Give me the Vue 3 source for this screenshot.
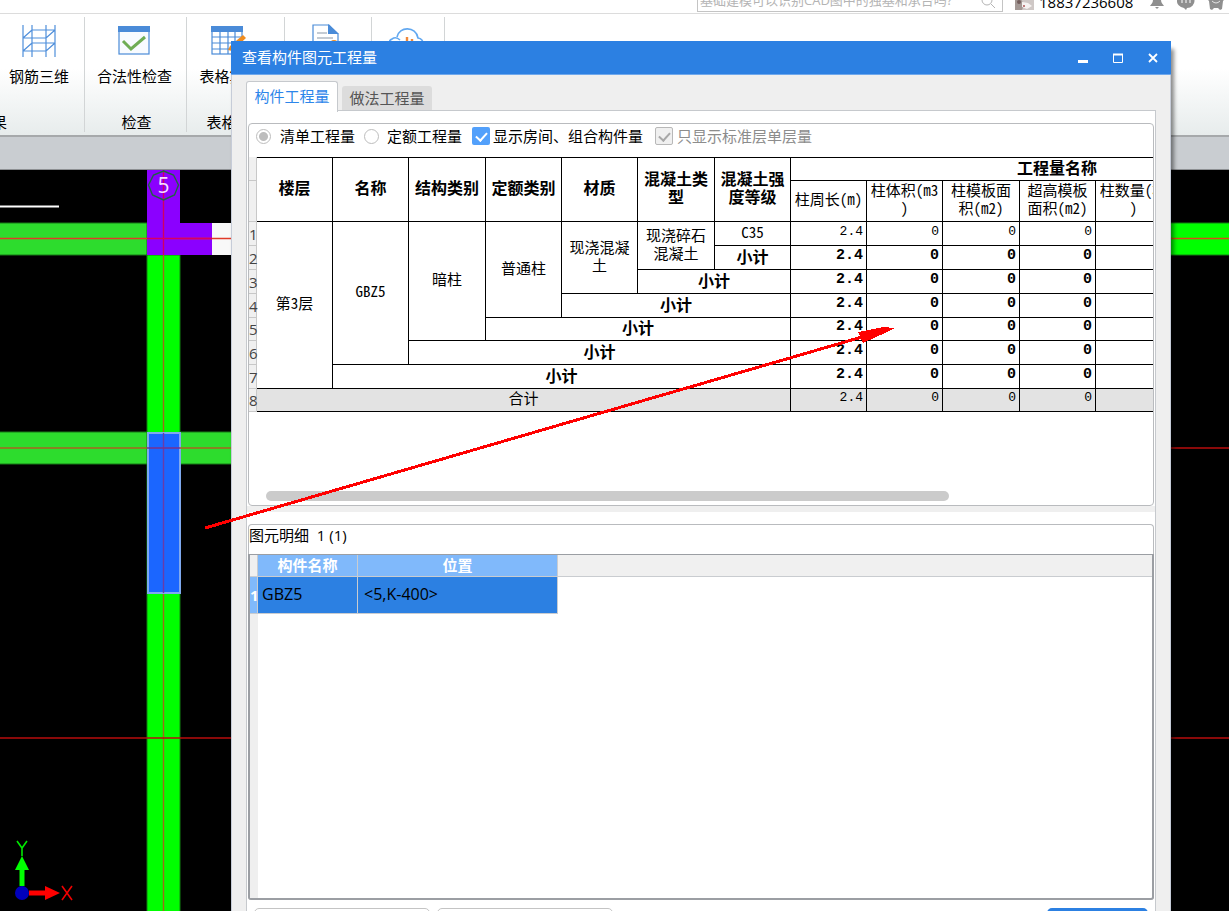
<script setup>
import { ref } from 'vue'

const mode = ref('list')
const showRooms = ref(true)
const floorOnly = ref(true)

const colClasses = ['', '', 'wide', '', '', 'wide', '', '', '', 'wide', '', '', '', '']
const groupHeads = ['楼层', '名称', '结构类别', '定额类别', '材质', '混凝土类\n型', '混凝土强\n度等级']
const measures = ['柱周长(m)', '柱体积(m3\n)', '柱模板面\n积(m2)', '超高模板\n面积(m2)', '柱数量(根\n)', '', '']

const rows = [
  {
    cells: [
      { t: '第3层', r: 7 },
      { t: 'GBZ5', r: 6 },
      { t: '暗柱', r: 5 },
      { t: '普通柱', r: 4 },
      { t: '现浇混凝\n土', r: 3 },
      { t: '现浇碎石\n混凝土', r: 2 },
      { t: 'C35' }
    ]
  },
  { bold: true, cells: [{ t: '小计' }] },
  { bold: true, cells: [{ t: '小计', c: 2 }] },
  { bold: true, cells: [{ t: '小计', c: 3 }] },
  { bold: true, short: true, cells: [{ t: '小计', c: 4 }] },
  { bold: true, cells: [{ t: '小计', c: 5 }] },
  { bold: true, cells: [{ t: '小计', c: 6 }] },
  { total: true, short: true, cells: [{ t: '合计', c: 7 }] }
]
const values = ['2.4', '0', '0', '0', '', '', '']
</script>

<template>
  <div class="app">
    <header class="topbar">
      <div class="search">
        <input type="text" aria-label="搜索" placeholder="基础建模可以识别CAD图中的独基和承台吗?" />
        <svg width="16" height="16" viewBox="0 0 16 16" fill="none" stroke="#b4b4b4" stroke-width="1">
          <circle cx="6" cy="8" r="5" /><path d="M10 12l4 4" />
        </svg>
      </div>
      <svg class="avatar" width="19" height="19" viewBox="0 0 19 19">
        <rect width="19" height="19" fill="#cfc8c6" />
        <path d="M0 0h7l-1 8 3 6-2 5H0z" fill="#a39894" />
        <path d="M7 11l6 1 4 3-5 3-5-2z" fill="#f6f3f2" />
        <circle cx="4" cy="11" r="2" fill="#735e5c" /><circle cx="9" cy="15" r="1" fill="#a55" />
      </svg>
      <span class="phone">18837236608</span>
      <svg class="top-icon" width="16" height="16" viewBox="0 0 16 16" fill="#8f8f8f">
        <path d="M8 0c3 0 4 3 4 6 0 3 2 4 3 6H1c1-2 3-3 3-6 0-3 1-6 4-6zM6 13h4l-2 2z" />
      </svg>
      <svg class="top-icon" width="18" height="16" viewBox="0 0 18 16">
        <path d="M9 0a8 7 0 0 1 1 14l-1 2-2-2A8 7 0 0 1 9 0z" fill="#8f8f8f" />
        <path d="M5 5v4M9 5v4M13 5v4" stroke="#fff" stroke-width="1" />
      </svg>
      <svg class="top-icon" width="18" height="18" viewBox="0 0 18 18">
        <path d="M0 0h18v7l-2 2-1 8-2 1-2-2H7l-2 2-2-1-1-8-2-2z" fill="#8f8f8f" />
        <path d="M5 9q4 4 8 0" fill="none" stroke="#e4e4e4" />
      </svg>
    </header>

    <nav class="ribbon">
      <section class="group g1">
        <button type="button" class="tool">
          <svg width="34" height="34" viewBox="0 0 34 34" fill="none" stroke="#4f8fdb" stroke-width="1.2">
            <path d="M1 1v32M10 1v32M24 1v32M33 1v32M10 6h23M1 14h23M10 19h23M1 27h23M1 14l9-8M24 14l9-8M1 27l9-8M24 27l9-8" />
          </svg>
          <span>钢筋三维</span>
        </button>
        <div class="group-name">查看结果</div>
      </section>
      <section class="group g2">
        <button type="button" class="tool">
          <svg width="34" height="34" viewBox="0 0 34 34">
            <rect x="2" y="3" width="30" height="27" fill="#f8fbff" stroke="#4a8bd8" stroke-width="1.2" />
            <path d="M1 2h32v6H1z" fill="#4a8bd8" />
            <path d="M6 17l8 8L28 13" fill="none" stroke="#6fad55" stroke-width="3" />
          </svg>
          <span>合法性检查</span>
        </button>
        <div class="group-name">检查</div>
      </section>
      <section class="group g3">
        <button type="button" class="tool">
          <svg width="38" height="34" viewBox="0 0 38 34">
            <rect x="2" y="3" width="30" height="27" fill="#fff" stroke="#4a8bd8" stroke-width="1.2" />
            <path d="M1 2h32v6H1z" fill="#4a8bd8" />
            <path d="M2 13h30M2 19h30M2 25h30M10 8v22M18 8v22M25 8v22" stroke="#4a8bd8" stroke-width="1.2" />
            <path d="M18 26l2-4 13-11 3 3-14 13z" fill="#f08c1e" />
          </svg>
          <span>表格算量</span>
        </button>
        <div class="group-name">表格算量</div>
      </section>
      <section class="group g4">
        <button type="button" class="tool" aria-label="报表">
          <svg width="34" height="34" viewBox="0 0 34 34">
            <path d="M2 1h16l9 9v22H2z" fill="#fff" stroke="#4a8bd8" stroke-width="1.2" />
            <path d="M17 0l11 10H17z" fill="#4a8bd8" />
            <path d="M6 9h10M6 14h16" stroke="#8a97a8" stroke-width="1.2" /><circle cx="23" cy="20" r="4" fill="#f08c1e" />
          </svg>
        </button>
      </section>
      <section class="group g5">
        <button type="button" class="tool" aria-label="云指标">
          <svg width="38" height="34" viewBox="0 0 38 34" fill="none">
            <path d="M5 30a8 8 0 0 1-2-15q4-3 8 1M8 13c2-11 19-11 21 1 7 1 7 12 2 15" stroke="#62a8f0" stroke-width="1.600" />
            <path d="M14 30V18M18 30V13M23 30V15" stroke="#f0883a" stroke-width="2.400" />
          </svg>
        </button>
      </section>
    </nav>
    <div class="band"></div>

    <main class="stage">
      <svg class="drawing" width="100%" height="100%">
        <path d="M0 36.500H59" stroke="#fff" stroke-width="2" />
        <g fill="#2ddc2d" stroke="#167a16" stroke-width="1">
          <rect x="-1" y="53" width="148" height="32" /><rect x="-1" y="262" width="260" height="32" />
        </g>
        <rect x="211" y="53" width="40" height="32" fill="#f8f8f8" />
        <rect x="147" y="85" width="33" height="700" fill="#00ff00" stroke="#108010" />
        <rect x="1100" y="53" width="2000" height="32" fill="#00ff00" stroke="#108010" />
        <path d="M147 0h33v53h32v32h-65z" fill="#8b00ff" />
        <rect x="148" y="263" width="32" height="160" fill="#1b66ff" stroke="#7fa9ee" stroke-width="2" />
        <g stroke-width="1.400">
          <path d="M163.500 0V85" stroke="#d00062" /><path d="M163.500 85V262M163.500 424V741" stroke="#a06a18" />
          <path d="M163.500 263V423" stroke="#6a3ca8" />
          <path d="M0 68.500H147M180 68.500H240" stroke="#e03a28" /><path d="M147 68.500H212" stroke="#d80060" />
          <path d="M0 278H147M180 278H240" stroke="#a86420" /><path d="M147 278H180" stroke="#7a3090" />
          <path d="M1100 68.500H3100" stroke="#d84a18" /><path d="M1100 278H3100M0 568H3100" stroke="#b80c0c" />
        </g>
        <path d="M163.500 1l10 4 5 10-4 10-11 5-11-5-4-10 5-10z" fill="none" stroke="#1f6444" stroke-width="1.400" />
        <text x="163.500" y="23" text-anchor="middle" class="axis-no">5</text>
        <g transform="translate(22 723)">
          <path d="M0-7v-23" stroke="#00ff00" stroke-width="5" /><path d="M-7-23L0-37l7 14z" fill="#00ff00" />
          <path d="M7 0h18" stroke="#ff0000" stroke-width="5" /><path d="M23-7l15 7-15 7z" fill="#ff0000" />
          <circle r="7" fill="#0000bc" />
          <path d="M-5-52l5 7 5-7M0-45v8" fill="none" stroke="#00e800" stroke-width="1.600" />
          <path d="M40-7l10 14M50-7L40 7" stroke="#f00000" stroke-width="1.600" />
        </g>
      </svg>
    </main>

    <section class="dialog" role="dialog" aria-labelledby="dialog-title">
      <div class="titlebar">
        <h1 id="dialog-title">查看构件图元工程量</h1>
        <button type="button" aria-label="最小化"><svg width="12" height="12"><path d="M1 9.500h10" stroke="#fff" stroke-width="3" /></svg></button>
        <button type="button" aria-label="最大化"><svg width="12" height="12"><path d="M1.500 2v8.500h9V2" fill="none" stroke="#fff" /><path d="M1 2.500h10" stroke="#fff" stroke-width="2" /></svg></button>
        <button type="button" aria-label="关闭"><svg width="12" height="12"><path d="M2 2l8 8M10 2l-8 8" stroke="#fff" stroke-width="1.800" /></svg></button>
      </div>

      <div class="tabs" role="tablist">
        <button type="button" role="tab" aria-selected="true" class="tab active">构件工程量</button>
        <button type="button" role="tab" aria-selected="false" class="tab">做法工程量</button>
      </div>

      <div class="panel">
        <div class="box summary">
          <div class="options">
            <label class="opt-a"><input v-model="mode" type="radio" value="list" name="mode" />清单工程量</label>
            <label class="opt-b"><input v-model="mode" type="radio" value="quota" name="mode" />定额工程量</label>
            <label class="opt-c"><input v-model="showRooms" type="checkbox" />显示房间、组合构件量</label>
            <label class="opt-d"><input v-model="floorOnly" type="checkbox" disabled />只显示标准层单层量</label>
          </div>
          <div class="scroller">
            <table class="quantities">
              <colgroup>
                <col class="index" />
                <col v-for="(c, i) in colClasses" :key="i" :class="c" />
              </colgroup>
              <thead>
                <tr class="head-top">
                  <td class="no"></td>
                  <th v-for="h in groupHeads" :key="h" rowspan="2" scope="col">{{ h }}</th>
                  <th colspan="7" class="span" scope="colgroup">工程量名称</th>
                </tr>
                <tr class="head-sub">
                  <td class="no"></td>
                  <td v-for="(m, i) in measures" :key="i">{{ m }}</td>
                </tr>
              </thead>
              <tbody>
                <tr v-for="(row, i) in rows" :key="i" :class="{ bold: row.bold, total: row.total, short: row.short }">
                  <td class="no">{{ i + 1 }}</td>
                  <td v-for="cell in row.cells" :key="cell.t" :rowspan="cell.r || 1" :colspan="cell.c || 1">{{ cell.t }}</td>
                  <td v-for="(v, k) in values" :key="k" class="num">{{ v }}</td>
                </tr>
              </tbody>
            </table>
          </div>
          <div class="hbar"><span></span></div>
        </div>

        <div class="splitter"></div>

        <div class="box details">
          <h2>图元明细&nbsp; 1 (1)</h2>
          <div class="detail-frame">
            <table class="detail">
              <colgroup><col class="index" /><col class="name" /><col class="place" /><col /></colgroup>
              <thead>
                <tr><td class="idx"></td><th scope="col">构件名称</th><th scope="col">位置</th><td class="rest"></td></tr>
              </thead>
              <tbody>
                <tr><th class="row-no" scope="row">1</th><td>GBZ5</td><td class="pos">&lt;5,K-400&gt;</td><td class="blank"></td></tr>
              </tbody>
            </table>
            <div class="gutter"></div>
          </div>
        </div>

        <div class="actions">
          <button type="button" class="plain" aria-label="设置分类及工程量"></button>
          <button type="button" class="plain" aria-label="导出到Excel"></button>
          <button type="button" class="primary" aria-label="退出"></button>
        </div>
      </div>
    </section>

    <svg class="pointer" width="100%" height="100%" shape-rendering="crispEdges">
      <path d="M205 528L862 337" stroke="#ff0000" stroke-width="3" />
      <path d="M858 332l25-5 12 1-10 5-22 10z" fill="#ff0000" />
    </svg>
  </div>
</template>

<style>
body {
  margin: 0;
  overflow: hidden;
}
</style>

<style scoped>
* {
  box-sizing: border-box;
}
.app {
  position: relative;
  display: flex;
  flex-direction: column;
  height: 100vh;
  overflow: hidden;
  background: #fff;
  font-family: "Open Sans", "Noto Sans CJK SC", sans-serif;
  font-size: 15px;
  line-height: 20px;
  color: #000;
}
button {
  padding: 0;
  border: 0;
  background: none;
  font: inherit;
  color: inherit;
}
svg {
  display: block;
}
.topbar {
  flex: none;
  display: flex;
  align-items: flex-end;
  height: 14px;
  padding-right: 4px;
  border-bottom: 1px solid #dcdcdc;
  overflow: hidden;
}
.search {
  display: flex;
  align-items: center;
  width: 306px;
  height: 24px;
  margin: 0 12px 1px auto;
  padding: 0 5px 0 2px;
  border: 1px solid #c4c4c4;
  flex: none;
}
.search input {
  flex: 1;
  min-width: 0;
  height: 22px;
  padding: 0;
  border: 0;
  outline: 0;
  font: inherit;
  font-size: 13px;
}
.search input::placeholder {
  color: #b4b4b4;
  opacity: 1;
}
.avatar {
  margin: 0 5px 3px 0;
  flex: none;
}
.phone {
  width: 96px;
  margin: 0 14px 1px 0;
}
.top-icon {
  flex: none;
  margin: 0 12px 3px 0;
}
.top-icon:last-child {
  margin-right: 0;
}
.ribbon {
  flex: none;
  display: flex;
  height: 123px;
  padding: 3px 0;
  border-bottom: 2px solid #a6a9ab;
  background: linear-gradient(#fff 45%, #e7ecec);
}
.group {
  display: flex;
  flex-direction: column;
  justify-content: space-between;
  align-items: center;
  padding-top: 7px;
  border-right: 1px solid #d2d5d6;
  white-space: nowrap;
}
.g1 {
  width: 85px;
  padding-right: 6px;
}
.g2 {
  width: 102px;
  padding-right: 2px;
}
.g3 {
  width: 98px;
  padding-right: 12px;
}
.g4 {
  width: 87px;
}
.g5 {
  width: 73px;
}
.tool {
  display: flex;
  flex-direction: column;
  align-items: center;
  gap: 8px;
}
.group-name {
  align-self: center;
}
.g1 .group-name {
  align-self: flex-start;
  width: 7px;
  display: flex;
  justify-content: flex-end;
}
.g2 .group-name {
  padding-left: 4px;
}
.g3 .group-name {
  padding-left: 14px;
}
.band {
  flex: none;
  height: 33px;
  background: #c9cdd1;
  border-bottom: 1px solid #8d9093;
}
.stage {
  flex: 1;
  min-height: 0;
  background: #000;
}
.axis-no {
  font-size: 21px;
  fill: #f6dcff;
}
.dialog {
  position: absolute;
  top: 41px;
  right: 58px;
  bottom: 0;
  left: 231px;
  display: flex;
  flex-direction: column;
  background: #efefef;
  border: solid #c6ccd8;
  border-width: 0 1px;
  box-shadow: 3px 8px 4px rgba(0, 0, 0, 0.45);
}
.titlebar {
  flex: none;
  display: flex;
  align-items: center;
  gap: 23px;
  height: 34px;
  margin: 0 -1px;
  padding: 0 12px 0 11px;
  background: #2c80e2;
  border-bottom: 1px solid #6fa8ec;
  color: #fff;
}
.titlebar h1 {
  flex: 1;
  margin: 0;
  padding-bottom: 2px;
  font-size: 15px;
  font-weight: 400;
}
.tabs {
  flex: none;
  display: flex;
  align-items: flex-end;
  gap: 4px;
  height: 36px;
  padding-left: 14px;
}
.tab {
  width: 90px;
  height: 25px;
  padding-bottom: 2px;
  background: #dcdcdc;
  border-radius: 3px 3px 0 0;
  color: #555;
}
.tab.active {
  position: relative;
  z-index: 1;
  width: 92px;
  height: 31px;
  margin-bottom: -1px;
  background: #fff;
  border: 1px solid #c6c9cd;
  border-bottom: 0;
  color: #2c86ea;
}
.panel {
  flex: 1;
  min-height: 0;
  display: flex;
  flex-direction: column;
  margin: -1px 14px 0;
  border: solid #c6c9cd;
  border-width: 1px 1px 0;
  background: #fff;
}
.box {
  display: flex;
  flex-direction: column;
  margin: 0 1px;
  border: 1px solid #b9bbbe;
  border-radius: 4px;
}
.summary {
  flex: 0 0 383px;
  margin-top: 12px;
  overflow: hidden;
}
.options {
  flex: none;
  display: flex;
  align-items: center;
  height: 33px;
  padding: 0 0 9px 7px;
  white-space: nowrap;
}
.options label {
  display: flex;
  align-items: center;
}
.options input {
  appearance: none;
  position: relative;
  flex: none;
  margin: 0;
}
.options input[type="radio"] {
  width: 15px;
  height: 15px;
  border: 1px solid #bdbdbd;
  border-radius: 50%;
}
.options input[type="radio"]:checked {
  background: radial-gradient(#bdbdbd 4px, #fff 5px);
}
.options input[type="checkbox"] {
  width: 18px;
  height: 18px;
  border-radius: 2px;
  background: #52a0fb;
}
.options input[type="checkbox"]:checked::after {
  content: "";
  position: absolute;
  left: 6px;
  top: 3px;
  width: 5px;
  height: 9px;
  border: solid #fff;
  border-width: 0 2px 2px 0;
  transform: rotate(42deg);
}
.options input[type="checkbox"]:disabled {
  border: 1px solid #b8b8b8;
  background: #f0f0f0;
}
.options input[type="checkbox"]:disabled::after {
  left: 5px;
  top: 2px;
  border-color: #a8a8a8;
}
.opt-a {
  gap: 9px;
  margin-right: 9px;
}
.opt-b {
  gap: 8px;
  margin-right: 10px;
}
.opt-c {
  gap: 3px;
  margin-right: 12px;
}
.opt-d {
  gap: 4px;
  color: #8c8c8c;
}
.scroller {
  flex: 1;
  min-height: 0;
  overflow: hidden;
}
table {
  table-layout: fixed;
  border-collapse: separate;
  border-spacing: 0;
}
.quantities {
  width: 1075px;
  line-height: 18px;
  white-space: pre;
  text-align: center;
  font-feature-settings: "hwid";
  font-family: "Noto Sans CJK SC", monospace;
}
.quantities col {
  width: 76px;
}
.quantities col.wide {
  width: 77px;
}
.quantities col.index {
  width: 8px;
}
.quantities th,
.quantities td {
  padding: 0;
  border: solid #000;
  border-width: 0 1px 1px 0;
}
.quantities th {
  font-size: 16px;
  padding-bottom: 6px;
}
.quantities .head-top th {
  border-top-width: 1px;
}
.quantities .head-top th.span {
  padding: 0 0 4px;
}
.quantities .head-top {
  height: 24px;
}
.quantities .head-sub {
  height: 41px;
}
.quantities .head-sub td {
  padding-bottom: 4px;
}
.quantities tbody tr {
  height: 24px;
}
.quantities tbody tr.short {
  height: 23px;
}
.quantities tbody td {
  padding-bottom: 4px;
}
.quantities .bold td {
  font-size: 16px;
  font-weight: 700;
}
.quantities tbody td.num {
  padding: 0 3px 4px 0;
  font-family: "Liberation Mono", monospace;
  font-size: 13px;
  text-align: right;
}
.quantities tbody .bold td.num {
  font-size: 15px;
}
.quantities .total td {
  background: #e3e3e3;
}
.quantities tr td.no {
  padding: 0;
  border-color: #c8c8c8;
  background: #f0f0f0;
  font-family: "Open Sans", sans-serif;
  font-size: 15px;
  font-weight: 400;
  color: #444;
}
.hbar {
  flex: none;
  padding: 0 0 4px 17px;
}
.hbar span {
  display: block;
  width: 77%;
  height: 10px;
  border-radius: 5px;
  background: #cbcbcb;
}
.splitter {
  flex: none;
  height: 6px;
  margin-bottom: 12px;
  background: #efefef;
}
.details {
  flex: 1;
  min-height: 0;
  border-bottom: 0;
}
.details h2 {
  flex: none;
  height: 29px;
  margin: 0;
  font-size: 15px;
  font-weight: 400;
}
.detail-frame {
  flex: 1;
  min-height: 0;
  display: flex;
  flex-direction: column;
  margin: 0 -1px;
  border: 2px solid #9b9ea3;
  border-top-width: 1px;
  border-radius: 0 0 3px 3px;
}
.detail {
  width: 100%;
}
.detail .index {
  width: 8px;
}
.detail .name {
  width: 100px;
}
.detail .place {
  width: 200px;
}
.detail th,
.detail td {
  padding: 0;
  border: solid #c9ccd0;
  border-width: 0 1px 1px 0;
  line-height: 18px;
}
.detail thead tr {
  height: 22px;
}
.detail thead th {
  padding-bottom: 2px;
  background: #80b9fb;
  color: #fff;
}
.detail thead td {
  background: #f0f0f0;
}
.detail thead td.rest {
  border-right: 0;
}
.detail tbody tr {
  height: 37px;
}
.detail tbody td {
  padding: 0 0 2px 4px;
  background: #2c80e2;
  font-size: 16px;
}
.detail tbody td.pos {
  padding-left: 6px;
}
.detail tbody td.blank {
  border: 0;
  background: #fff;
}
.detail .row-no {
  background: #80b9fb;
  color: #fff;
}
.gutter {
  flex: 1;
  width: 8px;
  background: #efefef;
}
.actions {
  flex: none;
  display: flex;
  gap: 7px;
  height: 11px;
  padding: 8px 7px 0;
  overflow: hidden;
}
.actions button {
  flex: none;
  width: 176px;
  height: 30px;
  border: 1px solid #c4c4c4;
  border-radius: 5px;
}
.actions .primary {
  width: 101px;
  margin-left: auto;
  border: 0;
  background: #2c80e2;
}
.pointer {
  position: absolute;
  inset: 0;
  pointer-events: none;
}
</style>
